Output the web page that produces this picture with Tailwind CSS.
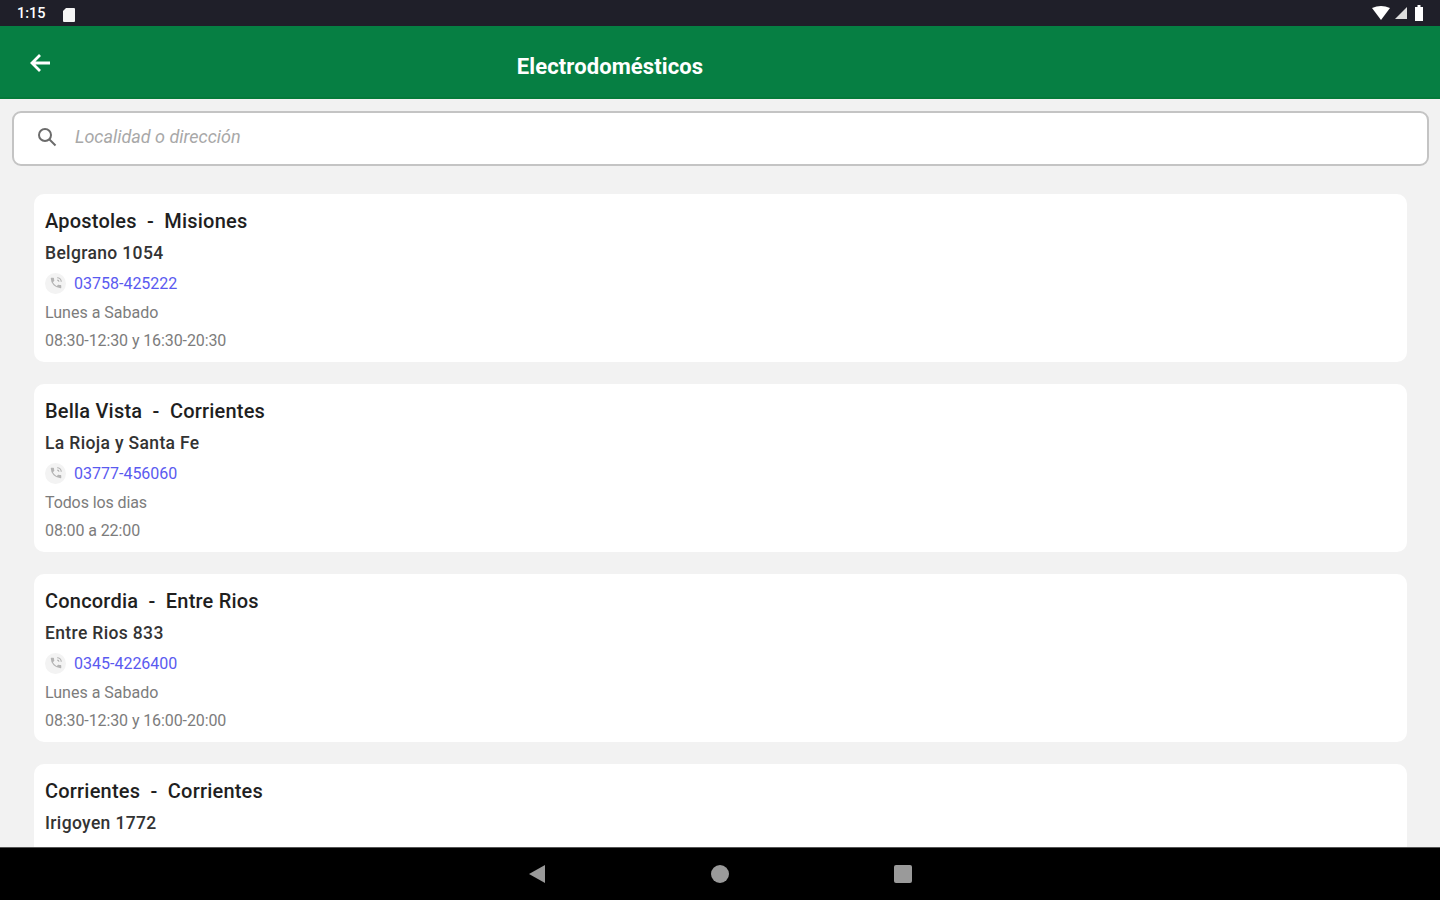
<!DOCTYPE html>
<html lang="es">
<head>
    <meta charset="UTF-8">
    <meta name="viewport" content="width=device-width, initial-scale=1.0">
    <title>Electrodomésticos</title>
    <script src="https://cdn.jsdelivr.net/npm/@tailwindcss/browser@4"></script>
</head>
<body class="font-['Roboto',sans-serif] bg-[#f2f2f2]">
<div class="h-[900px] w-[1440px] flex flex-col overflow-hidden">

    <!-- Status bar -->
    <div class="h-[26px] shrink-0 bg-[#1f1f29] flex items-center justify-between pl-[17px] pr-[16px] text-white">
        <div class="flex items-center gap-[16px] pt-[3px]">
            <span class="text-[14.500px] font-medium leading-none">1:15</span>
            <svg width="14" height="16" viewBox="0 0 14 16"><path d="M4 1h8a1 1 0 0 1 1 1v12a1 1 0 0 1-1 1H2a1 1 0 0 1-1-1V4z" fill="#f5f5f5"/></svg>
        </div>
        <div class="flex items-center gap-[4px]">
            <svg width="18" height="14" viewBox="0 0 18 14"><path d="M0 2 Q9-2 18 2L9 14z" fill="#fff"/></svg>
            <svg width="14" height="14" viewBox="0 0 14 14"><path d="M13 1v12H1z" fill="#ddd"/></svg>
            <svg width="10" height="16" viewBox="0 0 10 16" class="ml-[2px]"><path d="M3.500 0h3v2H9v14H1V2h2.500z" fill="#fff"/></svg>
        </div>
    </div>

    <!-- App bar -->
    <div class="h-[73px] shrink-0 bg-[#067f43] border-b-2 border-[#047a3a] relative flex items-center justify-center pr-[220px]">
        <svg class="absolute left-[29px] top-[26px]" width="22" height="22" viewBox="0 0 22 22" fill="none" stroke="#fff" stroke-width="2.800"><path d="M21 11H3M11 3l-8 8 8 8"/></svg>
        <h1 class="text-[22px] font-bold text-white tracking-[0.1px] mt-[9px]">Electrodomésticos</h1>
    </div>

    <!-- Search -->
    <div class="shrink-0 pt-[12px] pl-[12px] pr-[11px]">
        <div class="h-[55px] bg-white border-2 border-[#c4c4c4] rounded-[9px] flex items-center pl-[21px] pb-[4px] gap-[16px]">
            <svg width="24" height="24" viewBox="0 0 24 24" fill="none" stroke="#6b6b6b" stroke-width="2"><circle cx="10" cy="10" r="6"/><path d="M14.500 14.500l6 6"/></svg>
            <span class="text-[18px] italic text-[#a8a8a8]">Localidad o dirección</span>
        </div>
    </div>

    <!-- Store list -->
    <div class="flex-1 min-h-0 overflow-hidden pt-[28px] pl-[34px] pr-[33px] flex flex-col gap-[22px]">
        <div class="h-[168px] shrink-0 bg-white rounded-[10px] pl-[11px] flex flex-col">
            <p class="h-[49px] pt-[14px] text-[20px] font-medium tracking-[0.2px] text-[#1f1f1f] leading-[26px] whitespace-pre">Apostoles  -  Misiones</p>
            <p class="h-[28px] text-[17.500px] font-medium tracking-[0.35px] text-[#333] leading-[20px]">Belgrano 1054</p>
            <div class="h-[32px] flex items-center gap-[8px] -mt-[3px]">
                <span class="w-[21px] h-[21px] mb-[2px] rounded-full bg-[#f3f3f3] flex items-center justify-center"><svg width="14" height="14" viewBox="0 0 24 24" fill="#b4b4b4"><path d="M6.600 10.800a15 15 0 0 0 6.600 6.600l2.200-2.200a1 1 0 0 1 1-.25 11 11 0 0 0 3.600.6 1 1 0 0 1 1 1V20a1 1 0 0 1-1 1A17 17 0 0 1 3 4a1 1 0 0 1 1-1h3.500a1 1 0 0 1 1 1 11 11 0 0 0 .6 3.600 1 1 0 0 1-.25 1z"/><path d="M14 3a7 7 0 0 1 7 7M14 7a3 3 0 0 1 3 3" fill="none" stroke="#b4b4b4" stroke-width="2"/></svg></span>
                <span class="text-[16px] text-[#5a5af0] leading-none">03758-425222</span>
            </div>
            <p class="h-[28px] text-[16px] text-[#7c7c7c] leading-[26px]">Lunes a Sabado</p>
            <p class="h-[28px] text-[16px] tracking-[-0.1px] text-[#7c7c7c] leading-[26px]">08:30-12:30 y 16:30-20:30</p>
        </div>

        <div class="h-[168px] shrink-0 bg-white rounded-[10px] pl-[11px] flex flex-col">
            <p class="h-[49px] pt-[14px] text-[20px] font-medium tracking-[0.2px] text-[#1f1f1f] leading-[26px] whitespace-pre">Bella Vista  -  Corrientes</p>
            <p class="h-[28px] text-[17.500px] font-medium tracking-[0.35px] text-[#333] leading-[20px]">La Rioja y Santa Fe</p>
            <div class="h-[32px] flex items-center gap-[8px] -mt-[3px]">
                <span class="w-[21px] h-[21px] mb-[2px] rounded-full bg-[#f3f3f3] flex items-center justify-center"><svg width="14" height="14" viewBox="0 0 24 24" fill="#b4b4b4"><path d="M6.600 10.800a15 15 0 0 0 6.600 6.600l2.200-2.200a1 1 0 0 1 1-.25 11 11 0 0 0 3.600.6 1 1 0 0 1 1 1V20a1 1 0 0 1-1 1A17 17 0 0 1 3 4a1 1 0 0 1 1-1h3.500a1 1 0 0 1 1 1 11 11 0 0 0 .6 3.600 1 1 0 0 1-.25 1z"/><path d="M14 3a7 7 0 0 1 7 7M14 7a3 3 0 0 1 3 3" fill="none" stroke="#b4b4b4" stroke-width="2"/></svg></span>
                <span class="text-[16px] text-[#5a5af0] leading-none">03777-456060</span>
            </div>
            <p class="h-[28px] text-[16px] tracking-[-0.1px] text-[#7c7c7c] leading-[26px]">Todos los dias</p>
            <p class="h-[28px] text-[16px] tracking-[-0.1px] text-[#7c7c7c] leading-[26px]">08:00 a 22:00</p>
        </div>

        <div class="h-[168px] shrink-0 bg-white rounded-[10px] pl-[11px] flex flex-col">
            <p class="h-[49px] pt-[14px] text-[20px] font-medium tracking-[0.2px] text-[#1f1f1f] leading-[26px] whitespace-pre">Concordia  -  Entre Rios</p>
            <p class="h-[28px] text-[17.500px] font-medium tracking-[0.35px] text-[#333] leading-[20px]">Entre Rios 833</p>
            <div class="h-[32px] flex items-center gap-[8px] -mt-[3px]">
                <span class="w-[21px] h-[21px] mb-[2px] rounded-full bg-[#f3f3f3] flex items-center justify-center"><svg width="14" height="14" viewBox="0 0 24 24" fill="#b4b4b4"><path d="M6.600 10.800a15 15 0 0 0 6.600 6.600l2.200-2.200a1 1 0 0 1 1-.25 11 11 0 0 0 3.600.6 1 1 0 0 1 1 1V20a1 1 0 0 1-1 1A17 17 0 0 1 3 4a1 1 0 0 1 1-1h3.500a1 1 0 0 1 1 1 11 11 0 0 0 .6 3.600 1 1 0 0 1-.25 1z"/><path d="M14 3a7 7 0 0 1 7 7M14 7a3 3 0 0 1 3 3" fill="none" stroke="#b4b4b4" stroke-width="2"/></svg></span>
                <span class="text-[16px] text-[#5a5af0] leading-none">0345-4226400</span>
            </div>
            <p class="h-[28px] text-[16px] text-[#7c7c7c] leading-[26px]">Lunes a Sabado</p>
            <p class="h-[28px] text-[16px] tracking-[-0.1px] text-[#7c7c7c] leading-[26px]">08:30-12:30 y 16:00-20:00</p>
        </div>

        <div class="h-[168px] shrink-0 bg-white rounded-[10px] pl-[11px] flex flex-col">
            <p class="h-[49px] pt-[14px] text-[20px] font-medium tracking-[0.2px] text-[#1f1f1f] leading-[26px] whitespace-pre">Corrientes  -  Corrientes</p>
            <p class="h-[28px] text-[17.500px] font-medium tracking-[0.35px] text-[#333] leading-[20px]">Irigoyen 1772</p>
        </div>
    </div>

    <!-- Nav bar -->
    <div class="h-[53px] shrink-0 bg-black flex items-center justify-center gap-[165px] border-t border-[#555]">
        <svg width="18" height="20" viewBox="0 0 18 20"><path d="M17 1v18L1 10z" fill="#9a9a9a"/></svg>
        <span class="w-[18px] h-[18px] rounded-full bg-[#9a9a9a]"></span>
        <span class="w-[18px] h-[18px] rounded-[2px] bg-[#9a9a9a]"></span>
    </div>
</div>
</body>
</html>
